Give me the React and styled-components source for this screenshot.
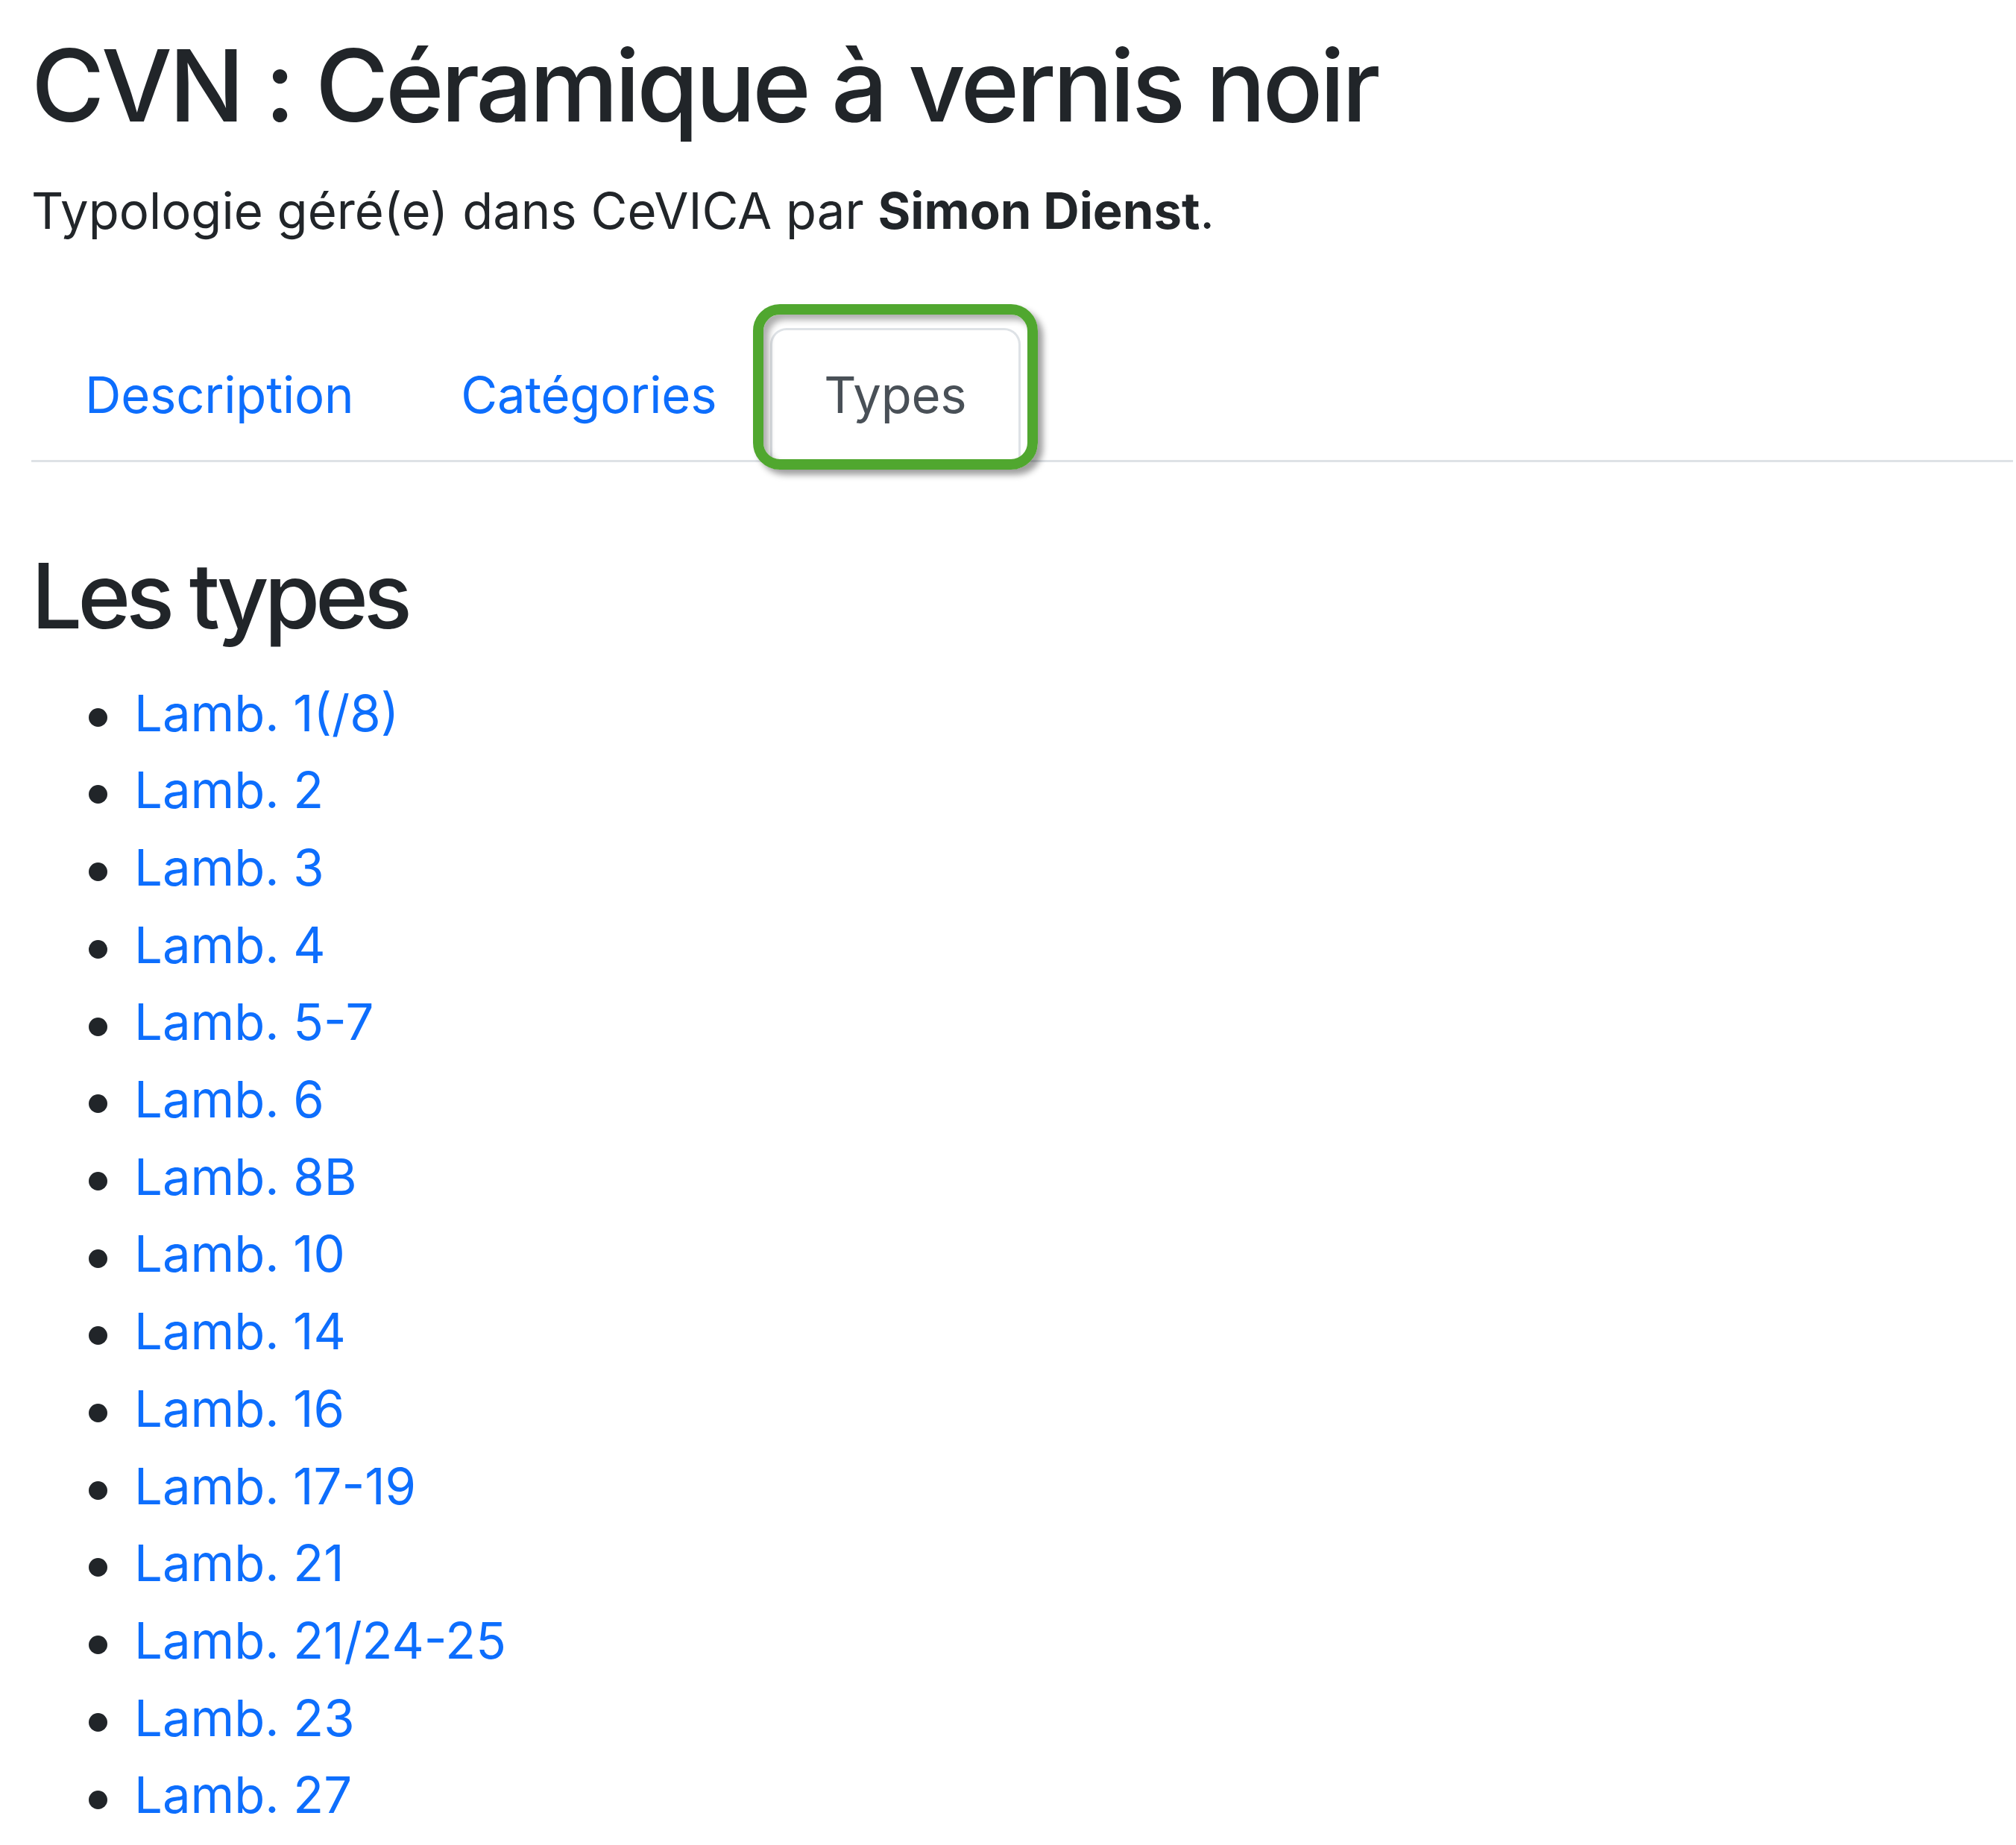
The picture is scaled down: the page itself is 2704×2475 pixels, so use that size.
import styled, { createGlobalStyle } from "styled-components";

const GlobalStyle = createGlobalStyle`
  html, body {
    margin: 0;
    padding: 0;
    background: #ffffff;
  }
  body {
    font-family: Inter, "Noto Sans", "Liberation Sans", sans-serif;
    color: #212529;
  }
`;

const Page = styled.main`
  padding: 30px 4px 60px 42px;
`;

const Title = styled.h1`
  margin: 0 0 33px 0;
  font-size: 134px;
  line-height: 168px;
  font-weight: 500;
  letter-spacing: -0.032em;
`;

const Lead = styled.p`
  margin: 0 0 105px 0;
  font-size: 67px;
  line-height: 104px;
  font-weight: 400;
`;

const Tabs = styled.nav`
  display: flex;
  border-bottom: 3.5px solid #dee2e6;
`;

const Tab = styled.a`
  position: relative;
  display: block;
  margin-bottom: -3.5px;
  padding: 35px 69px;
  font-size: 67px;
  line-height: 104px;
  letter-spacing: -0.003em;
  text-decoration: none;
  color: ${(p) => (p.$active ? "#495057" : "#0d6efd")};
  background: ${(p) => (p.$active ? "#ffffff" : "transparent")};
  border: 3.5px solid ${(p) => (p.$active ? "#dee2e6" : "transparent")};
  border-bottom-color: ${(p) => (p.$active ? "#ffffff" : "transparent")};
  border-radius: 22px 22px 0 0;
`;

/* green annotation frame drawn over the active tab */
const Highlight = styled.span`
  position: absolute;
  top: -35px;
  left: -26px;
  right: -26px;
  bottom: -13px;
  border: 14px solid #50a72f;
  border-radius: 36px;
  box-shadow: 7px 7px 8px rgba(0, 0, 0, 0.38),
    inset 7px 7px 8px rgba(0, 0, 0, 0.32);
  pointer-events: none;
`;

const Section = styled.section`
  padding-top: 107px;
`;

const Heading = styled.h2`
  margin: 0 0 33px 0;
  font-size: 121px;
  line-height: 145px;
  font-weight: 500;
  letter-spacing: -0.052em;
`;

const TypeList = styled.ul`
  list-style: none;
  margin: 0;
  padding: 0 0 0 77px;
`;

const TypeItem = styled.li`
  font-size: 67px;
  line-height: 103.7px;

  &::before {
    content: "";
    display: inline-block;
    width: 25px;
    height: 25px;
    margin-right: 36px;
    border-radius: 50%;
    background: #212529;
    vertical-align: middle;
  }
`;

const TypeLink = styled.a`
  color: #0d6efd;
  text-decoration: none;
`;

const tabs = [
  { label: "Description" },
  { label: "Catégories" },
  { label: "Types", active: true },
];

const types = [
  "Lamb. 1(/8)",
  "Lamb. 2",
  "Lamb. 3",
  "Lamb. 4",
  "Lamb. 5-7",
  "Lamb. 6",
  "Lamb. 8B",
  "Lamb. 10",
  "Lamb. 14",
  "Lamb. 16",
  "Lamb. 17-19",
  "Lamb. 21",
  "Lamb. 21/24-25",
  "Lamb. 23",
  "Lamb. 27",
];

export default function App() {
  return (
    <>
      <GlobalStyle />
      <Page>
        <Title>CVN : Céramique à vernis noir</Title>
        <Lead>
          Typologie géré(e) dans CeVICA par <strong>Simon Dienst</strong>.
        </Lead>
        <Tabs>
          {tabs.map((t) => (
            <Tab key={t.label} href="#" $active={t.active}>
              {t.label}
              {t.active && <Highlight />}
            </Tab>
          ))}
        </Tabs>
        <Section>
          <Heading>Les types</Heading>
          <TypeList>
            {types.map((t) => (
              <TypeItem key={t}>
                <TypeLink href="#">{t}</TypeLink>
              </TypeItem>
            ))}
          </TypeList>
        </Section>
      </Page>
    </>
  );
}
